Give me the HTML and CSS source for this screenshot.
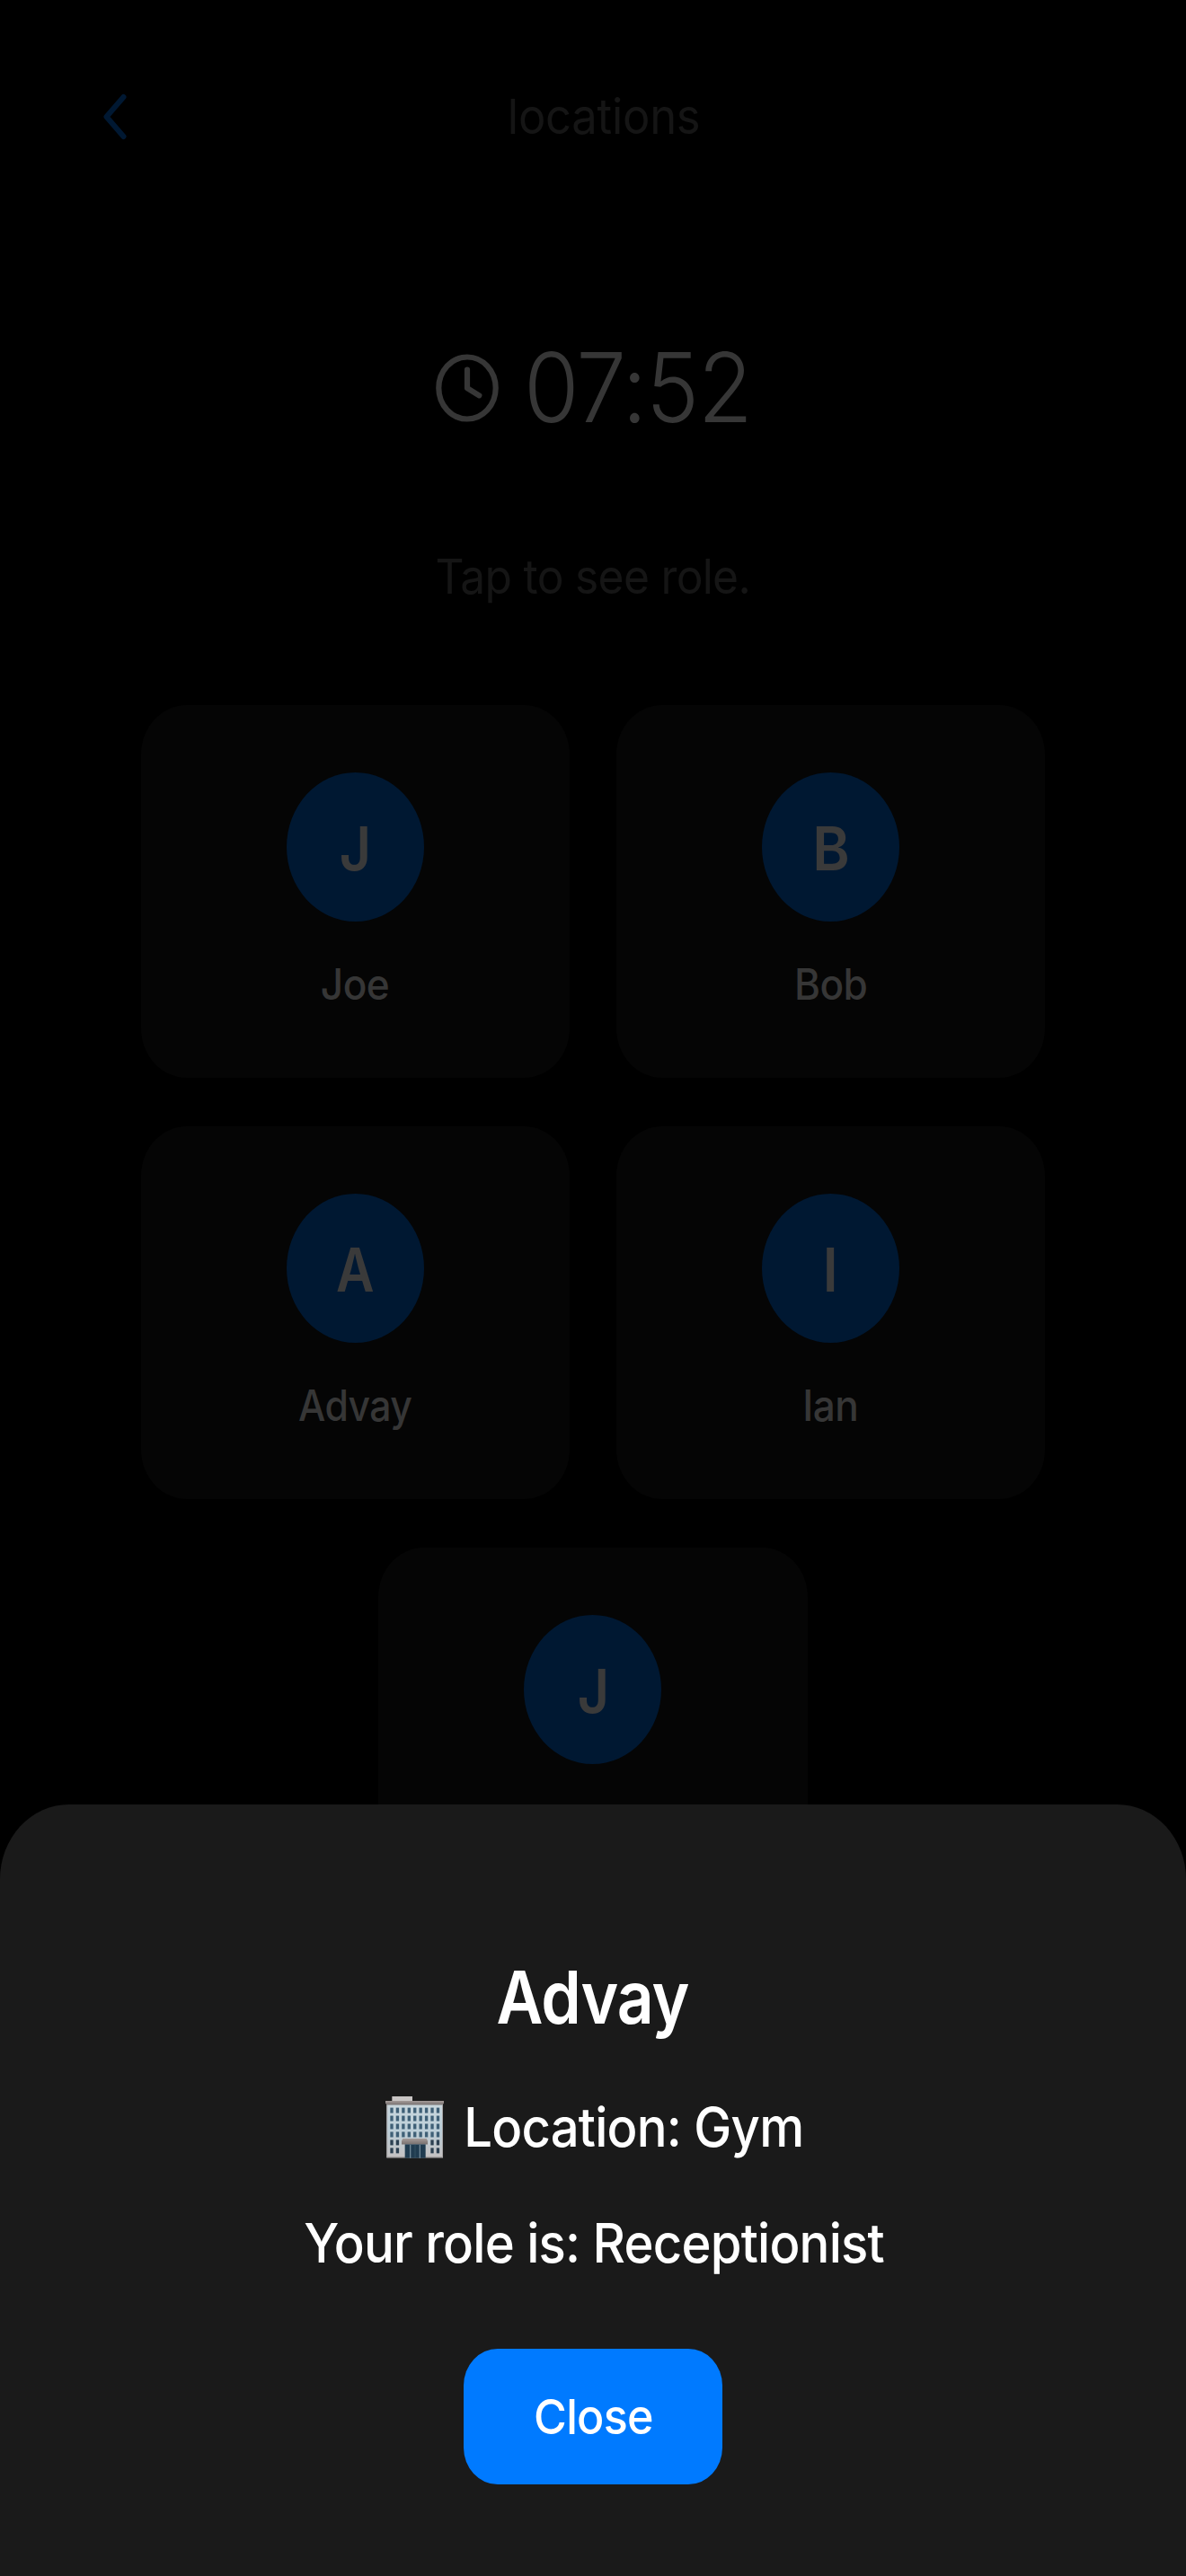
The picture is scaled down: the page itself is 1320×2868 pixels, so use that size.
FILE: index.html
```html
<!DOCTYPE html>
<html lang="en">
<head>
<meta charset="utf-8">
<title>locations</title>
<link rel="stylesheet" href="styles.css">
</head>
<body>
<div class="screen">
  <header class="header">
    <svg class="back" viewBox="0 0 28 52" aria-hidden="true"><path d="M23.5 4 L4.5 26 L23.5 48"/></svg>
    <h1 class="title"><span class="fit">locations</span></h1>
  </header>
  <div class="timer">
    <svg class="clock" viewBox="0 0 70 76" aria-hidden="true"><ellipse cx="35" cy="38" rx="31.7" ry="34.5"/><path d="M35 17.5 V38.2 L48.3 46.3"/></svg>
    <span class="time">07:52</span>
  </div>
  <p class="hint"><span class="fit">Tap to see role.</span></p>
  <main class="players">
    <section class="card"><div class="avatar"><span class="fit">J</span></div><div class="name"><span class="fit">Joe</span></div></section>
    <section class="card"><div class="avatar"><span class="fit wide">B</span></div><div class="name"><span class="fit">Bob</span></div></section>
    <section class="card"><div class="avatar"><span class="fit tight">A</span></div><div class="name"><span class="fit tight">Advay</span></div></section>
    <section class="card"><div class="avatar"><span class="fit">I</span></div><div class="name"><span class="fit">Ian</span></div></section>
    <section class="card"><div class="avatar"><span class="fit">J</span></div></section>
  </main>
  <div class="sheet" role="dialog">
    <h2 class="sheet-title"><span class="fit">Advay</span></h2>
    <div class="location">
      <svg class="building" viewBox="88 522 195 208" preserveAspectRatio="none" aria-hidden="true">
        <defs>
          <linearGradient id="wall" x1="0" y1="0" x2="0" y2="1"><stop offset="0" stop-color="#c9d6dc"/><stop offset=".5" stop-color="#bccfd9"/><stop offset="1" stop-color="#c4c1c1"/></linearGradient>
          <linearGradient id="roof" x1="0" y1="0" x2="0" y2="1"><stop offset="0" stop-color="#a39a98"/><stop offset="1" stop-color="#77706f"/></linearGradient>
          <g id="pair"><rect width="10" height="18"/><rect x="19.3" width="10" height="18"/></g>
          <g id="row"><use href="#pair"/><use href="#pair" x="38.6"/><use href="#pair" x="77.2"/><use href="#pair" x="115.8"/><rect x="154.4" width="10" height="18"/></g>
        </defs>
        <rect x="110" y="522" width="68" height="18" fill="#c9c5c4"/>
        <rect x="92" y="545" width="188" height="183" fill="url(#wall)"/>
        <path d="M92 551 H95 V728 H92 Z M277 551 H280 V728 H277 Z M92 724 H280 V728 H92 Z" fill="#a5a3a4"/>
        <path d="M88 537 H283 V544 L279 551 H92 L88 544 Z" fill="url(#roof)"/>
        <g fill="#3f6077">
          <use href="#row" x="104" y="560"/><use href="#row" x="104" y="587"/><use href="#row" x="104" y="614"/><use href="#row" x="104" y="641"/>
        </g>
        <g fill="#2c4051">
          <use href="#pair" x="104" y="668"/><use href="#pair" x="239" y="668"/><use href="#pair" x="104" y="695"/><use href="#pair" x="239" y="695"/>
        </g>
        <path d="M146 664 H225 L229 671 V683 H142 V671 Z" fill="url(#roof)"/>
        <rect x="153" y="683" width="69" height="46" fill="#203c50"/>
        <path d="M171 684 V729 M203 684 V729" stroke="#6f8796" stroke-width="4"/>
        <path d="M187 684 V729" stroke="#3d5b6e" stroke-width="2"/>
      </svg>
      <span class="fit">Location: Gym</span>
    </div>
    <p class="role"><span class="fit">Your role is: Receptionist</span></p>
    <button class="close"><span class="fit">Close</span></button>
  </div>
</div>
</body>
</html>
```
FILE: styles.css
```css
* { box-sizing: border-box; margin: 0; padding: 0; }

body {
  background: #000;
  font-family: Inter, "Liberation Sans", sans-serif;
}

.screen {
  position: relative;
  width: 1320px;
  height: 2868px;
  overflow: hidden;
  background: #000;
}

/* Narrowed lettering */
.fit {
  display: inline-block;
  white-space: nowrap;
  letter-spacing: -0.014em;
  transform: scaleX(0.93);
}

.header {
  display: flex;
  align-items: center;
  height: 260px;
  padding: 0 118px 0 114px;
}
.back {
  width: 28px;
  height: 52px;
  fill: none;
  stroke: #001832;
  stroke-width: 6;
  stroke-linecap: round;
  stroke-linejoin: round;
}
.title {
  flex: 1;
  text-align: center;
  font-size: 54px;
  font-weight: 400;
  line-height: 64px;
  color: #151515;
}
.title .fit {
  letter-spacing: -0.005em;
  transform: scaleX(0.94);
}

.timer {
  display: flex;
  align-items: center;
  gap: 19px;
  height: 343px;
  padding-left: 485px;
  color: #363636;
}
.clock {
  width: 70px;
  height: 76px;
  margin-top: 1px;
  fill: none;
  stroke: currentColor;
  stroke-width: 6.2;
  stroke-linecap: round;
  stroke-linejoin: round;
}
.time {
  font-size: 106.8px;
  font-weight: 300;
  line-height: 130px;
  letter-spacing: -1.5px;
  transform: scaleX(0.934);
}

.hint {
  height: 182px;
  padding-right: 1px;
  text-align: center;
  font-size: 53px;
  line-height: 79px;
  color: #151515;
}
.hint .fit { transform: scaleX(0.938); }

.players {
  display: flex;
  flex-wrap: wrap;
  justify-content: center;
  gap: 54px 52px;
  padding: 0 156px;
}
.card {
  display: flex;
  flex-direction: column;
  align-items: center;
  width: 477.3px;
  height: 415px;
  padding-top: 75px;
  border-radius: 51px / 55px;
  background: #050505;
}
.avatar {
  display: flex;
  align-items: center;
  justify-content: center;
  width: 153px;
  height: 166px;
  padding-top: 3px;
  border-radius: 50%;
  background: #001832;
  color: #3a3a3a;
  font-size: 67px;
  font-weight: 600;
}
.avatar .fit {
  letter-spacing: 0;
  transform: scaleX(0.91);
}
.avatar .wide { transform: scaleX(0.939); }
.avatar .tight { transform: scaleX(0.872); }
.name {
  margin-top: 40px;
  font-size: 47.5px;
  font-weight: 500;
  line-height: 60px;
  color: #363636;
}
.name .tight { transform: scaleX(0.9); }

.sheet {
  position: absolute;
  left: 0;
  right: 0;
  bottom: 0;
  display: flex;
  flex-direction: column;
  align-items: center;
  height: 859px;
  padding-top: 166px;
  border-radius: 77px 77px 0 0 / 83px 83px 0 0;
  background: #1a1a1a;
  color: #fff;
  font-size: 60.5px;
  font-weight: 500;
  line-height: 74px;
}
.sheet-title {
  padding-right: 2px;
  font-size: 81px;
  font-weight: 600;
  line-height: 98px;
}
.sheet-title .fit { transform: scaleX(0.881); }
.location {
  display: flex;
  align-items: center;
  gap: 8px;
  align-self: stretch;
  margin-top: 58px;
  padding-left: 429px;
}
.building {
  width: 65px;
  height: 69px;
}
.role {
  margin-top: 55px;
  padding-left: 3px;
}
.close {
  width: 288px;
  height: 151px;
  margin-top: 81px;
  border: 0;
  border-radius: 38px / 41px;
  background: #007aff;
  color: #fff;
  font: inherit;
  font-size: 54px;
}
```
